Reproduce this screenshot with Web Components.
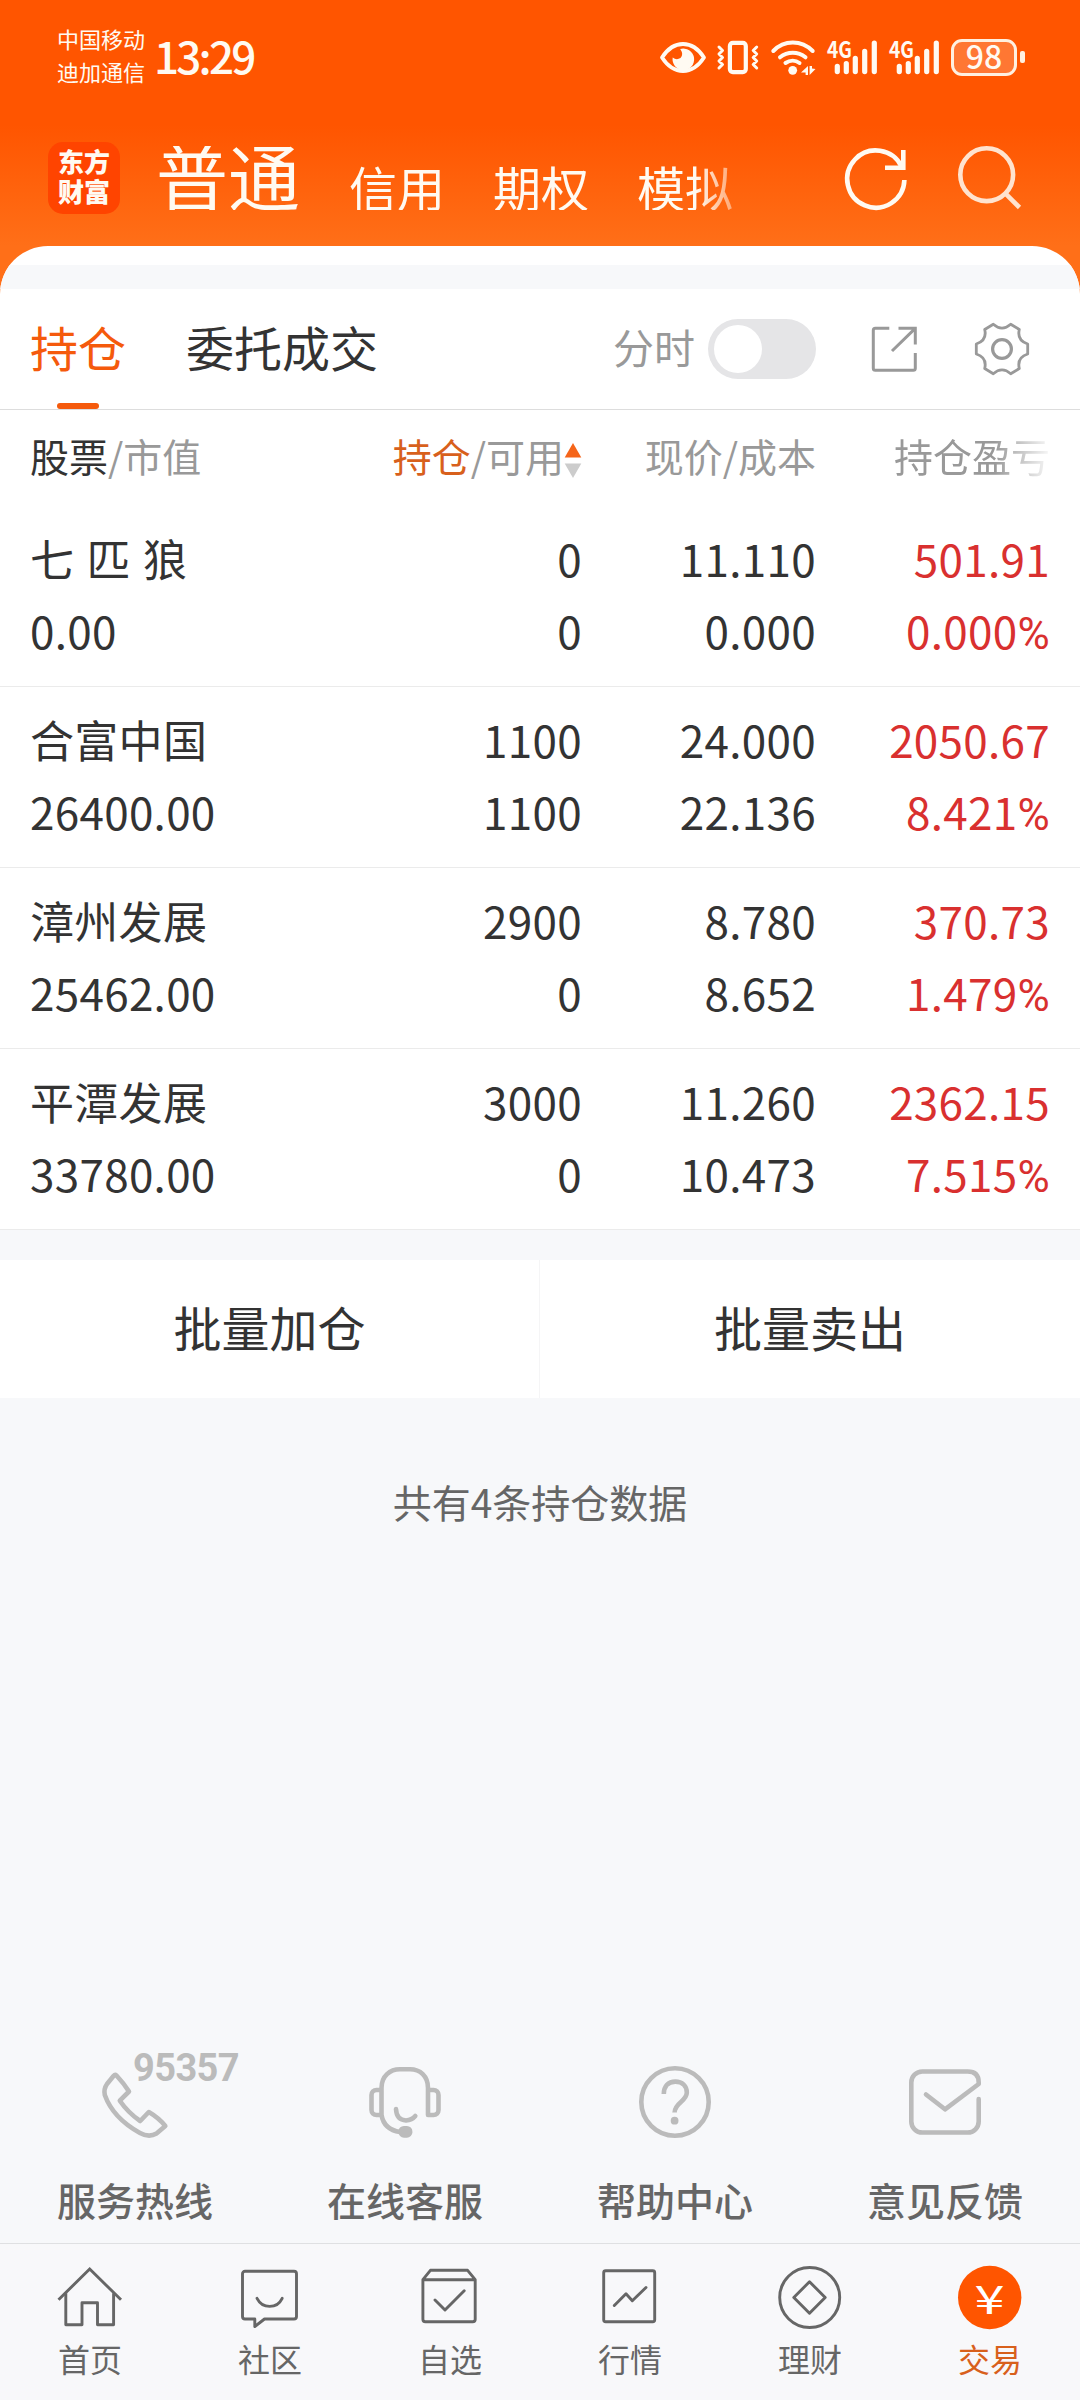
<!DOCTYPE html>
<html lang="zh-CN">
<head>
<meta charset="UTF-8">
<meta name="viewport" content="width=device-width, initial-scale=1.0">
<title>持仓</title>
<style>
  :root {
    --brand: #ff5500;
    --text: #333333;
    --muted: #999999;
    --up: #d9302f;
    --page: #f7f8fa;
  }

  body {
    margin: 0;
    width: 1080px;
    height: 2400px;
    display: flex;
    flex-direction: column;
    overflow: hidden;
    background: var(--page);
    color: var(--text);
    font-family: "Noto Sans CJK SC", "Noto Sans", sans-serif;
  }
</style>
</head>
<body>
  <app-header>
    <status-bar slot="status" carrier="中国移动" carrier2="迪加通信" time="13:29" battery="98"></status-bar>
    <span slot="current">普通</span>
    <span slot="link">信用</span>
    <span slot="link">期权</span>
    <span slot="link">模拟</span>
  </app-header>

  <holdings-card>
    <holdings-tabs slot="tabs" active="持仓" other="委托成交" toggle="分时"></holdings-tabs>
    <holdings-head slot="head"></holdings-head>
    <holding-row name="七 匹 狼" value="0.00" amount="0" usable="0" price="11.110" cost="0.000" profit="501.91" rate="0.000%"></holding-row>
    <holding-row name="合富中国" value="26400.00" amount="1100" usable="1100" price="24.000" cost="22.136" profit="2050.67" rate="8.421%"></holding-row>
    <holding-row name="漳州发展" value="25462.00" amount="2900" usable="0" price="8.780" cost="8.652" profit="370.73" rate="1.479%"></holding-row>
    <holding-row name="平潭发展" value="33780.00" amount="3000" usable="0" price="11.260" cost="10.473" profit="2362.15" rate="7.515%"></holding-row>
  </holdings-card>

  <batch-actions>
    <span slot="buy">批量加仓</span>
    <span slot="sell">批量卖出</span>
    <span slot="note">共有4条持仓数据</span>
  </batch-actions>

  <service-bar>
    <service-item icon="phone" badge="95357">服务热线</service-item>
    <service-item icon="headset">在线客服</service-item>
    <service-item icon="help">帮助中心</service-item>
    <service-item icon="mail">意见反馈</service-item>
  </service-bar>

  <bottom-nav>
    <nav-item icon="home">首页</nav-item>
    <nav-item icon="chat">社区</nav-item>
    <nav-item icon="box">自选</nav-item>
    <nav-item icon="chart">行情</nav-item>
    <nav-item icon="coin">理财</nav-item>
    <nav-item icon="trade" active>交易</nav-item>
  </bottom-nav>

<script>
  // name: [width, height, stroke width, markup]
  const ICONS = {
    eye: [46, 31, 3.8, `
      <path d="M2 15.5C7.5 7 14.5 2 23 2s15.500 5 21 13.500C38.500 24 31.500 29 23 29S7.500 24 2 15.500z"/>
      <path fill="currentColor" stroke="none" d="M20.200 7A10.800 10.800 0 1 1 12.700 15.500Q16.500 18.500 20.500 16Q24 12.500 20.200 7z"/>`],
    vibrate: [43, 35, 3, `
      <rect x="12.900" y="2.900" width="15.900" height="29.200" rx="3" stroke-width="4.200"/>
      <path d="M2 7l3.500 3.500L2 14l3.500 3.500L2 21l3.500 3.500L2 28M39.700 7l-3.500 3.500 3.500 3.500-3.500 3.500 3.500 3.500-3.500 3.500 3.500 3.500"/>`],
    wifi: [45, 35, 4, `
      <path d="M2.300 11C13-.3 30.500-.3 41.700 11M9 17.300c7.500-6.200 18-6.200 25.500 0M14.500 23c4.500-3 10-3 14 0"/>
      <circle cx="21.700" cy="30.300" r="4.400" fill="currentColor" stroke="none"/>
      <path fill="currentColor" stroke="none" d="M37 26v9h-2.400v-2.500H30zM38.600 26H41v2.500l3.500.5-5.900 6z"/>`],
    signal: [51, 35, 5.2, `
      <path d="M10.300 26.300v5.300M19.300 23.600v8M28.300 18.300v13.300M37.700 11.300v20.300M47.300 3v28.600"/>
      <text x="0" y="17.800" font-size="23" font-weight="700" textLength="25" lengthAdjust="spacingAndGlyphs" fill="currentColor" stroke="none">4G</text>`],
    refresh: [62, 62, 4.6, `
      <g stroke-linecap="butt" stroke-linejoin="miter"><path d="M59.400 32A28.600 28.600 0 1 1 56.500 18.500"/><path d="M58.300 2v17.800H40"/></g>`],
    search: [64, 64, 4.6, `
      <g stroke-linecap="butt"><circle cx="28.700" cy="28.700" r="26.400"/><path d="M47.300 47.300L61.500 61.500"/></g>`],
    share: [46, 46, 3, `
      <g stroke-linecap="butt" stroke-linejoin="miter"><path d="M18.300 2.300h-14a2 2 0 0 0-2 2v38a2 2 0 0 0 2 2h38a2 2 0 0 0 2-2V27M27.500 2.300h16.800v16.200M44 2.600L21 25"/></g>`],
    gear: [56, 56, 2.8, `
      <g transform="translate(28 28)"><path d="M25.700-5Q14.700-8.500 17.300-19.500L8.700-24.700Q0-17-8.700-24.700L-17.300-19.500Q-14.700-8.500-25.700-5V5Q-14.700 8.500-17.300 19.500L-8.700 24.700Q0 17 8.700 24.700L17.300 19.500Q14.700 8.500 25.700 5z"/><circle r="9.400" stroke-width="3.200"/></g>`],
    phone: [72, 72, 4.6, `
      <path d="M17.500 9.500Q24.500 17 30 25.500L20.800 34.700Q29 46.500 41.200 55L49.800 46Q60 52 66.300 60L57.500 67.500Q50 72 41 67Q14 52 5.800 29Q4.500 23 8 18L14.500 10Q16 8.300 17.500 9.500z"/>`],
    headset: [72, 72, 4.6, `
      <path d="M12.500 49V22C12.500 10 21 3.300 31 3.300h10C51 3.300 59 10 59 22v27M12.500 24h-5a5 5 0 0 0-5 5v15a5 5 0 0 0 5 5h5M59 24h5.500a5 5 0 0 1 5 5v15a5 5 0 0 1-5 5H59M12.500 49Q15 63.500 31 66M27 43Q27.500 54 37 54.500Q43 54 46.300 50"/>
      <rect x="29.400" y="60" width="14" height="11.700" rx="5.500" fill="currentColor" stroke="none"/>`],
    help: [72, 72, 4.6, `
      <circle cx="36" cy="36" r="33.700"/>
      <path stroke-linecap="butt" d="M24.800 28c0-8 4.500-12.400 11.500-12.400S47.800 20 47.800 26.500c0 9-12.200 10-12.200 20"/>
      <circle cx="35.600" cy="54.700" r="3.900" fill="currentColor" stroke="none"/>`],
    mail: [72, 72, 4.6, `
      <path d="M69.700 33v22.500a11 11 0 0 1-11 11H13.300a11 11 0 0 1-11-11v-39a11 11 0 0 1 11-11h45.400q11 0 11 11v1.500L36 43.300 17 28.500"/>`],
    home: [64, 64, 2.9, `
      <g stroke-linecap="butt" stroke-linejoin="miter"><path d="M.5 33.800L31.700 3 63 33.800"/><path stroke-linejoin="round" d="M7.800 27.300v31.400h16.200v-22h15.500v22h16.100V27.300"/></g>`],
    chat: [64, 64, 2.9, `
      <path d="M7 5.300h49a2.500 2.500 0 0 1 2.500 2.500v42.700a2.500 2.500 0 0 1-2.500 2.500H26.500l-9.700 7.500V53H7a2.500 2.500 0 0 1-2.500-2.500V7.800A2.500 2.500 0 0 1 7 5.300z"/>
      <path d="M19 32.300c5.500 10.800 20 10.800 25.200 0"/>`],
    box: [64, 64, 2.9, `
      <path d="M4.900 13.700l7.500-9.400h37.200l7.600 9.400v39.500a2.500 2.500 0 0 1-2.500 2.500H7.400a2.500 2.500 0 0 1-2.500-2.500zH57M17 34l10 10 19.200-19.300"/>`],
    chart: [64, 64, 2.9, `
      <rect x="5.700" y="4.700" width="51" height="51" rx="2"/>
      <path d="M16.300 39.500L28 27.800l6.300 7L48 21.500"/>`],
    coin: [64, 64, 2.9, `
      <circle cx="31.700" cy="31.500" r="30"/>
      <path d="M31.500 15.700L47.200 31.500 31.500 47.300 15.800 31.500z"/>`],
    trade: [64, 64, 0, `
      <circle cx="31.700" cy="31.500" r="31.700" fill="currentColor"/>
      <text x="16.500" y="47.500" font-size="39" textLength="30" lengthAdjust="spacingAndGlyphs" fill="#fff">¥</text>`],
  };

  class UiIcon extends HTMLElement {
    connectedCallback() {
      this.attachShadow({ mode: 'open' });
      const [w, h, stroke, body] = ICONS[this.getAttribute('name')];
      this.shadowRoot.innerHTML = `
        <style>
          :host { display: block; flex: none; width: ${w}px; height: ${h}px; }
          svg { display: block; overflow: visible; }
        </style>
        <svg width="${w}" height="${h}" viewBox="0 0 ${w} ${h}" fill="none" stroke="currentColor"
          stroke-width="${stroke}" stroke-linecap="round" stroke-linejoin="round">${body}</svg>
      `;
    }
  }

  class StatusBar extends HTMLElement {
    connectedCallback() {
      this.attachShadow({ mode: 'open' });
      const attr = (name) => this.getAttribute(name);
      this.shadowRoot.innerHTML = `
        <style>
          :host {
            display: flex;
            align-items: center;
            height: 114px;
            padding: 0 55px 0 57px;
            color: #fffaf2;
          }
          .carrier {
            font-size: 22px;
            line-height: 33px;
            margin-right: 9px;
            padding-bottom: 4px;
          }
          .carrier div { white-space: nowrap; }
          .time {
            font-size: 44px;
            font-weight: 500;
            line-height: 60px;
            letter-spacing: -2.8px;
            padding-bottom: 4px;
          }
          .icons {
            display: flex;
            align-items: center;
            gap: 11px;
            margin-left: auto;
          }
          .battery { display: flex; align-items: center; gap: 3px; width: 74px; }
          .level {
            box-sizing: border-box;
            width: 66px;
            height: 37px;
            border: 3px solid #fff0e0;
            border-radius: 11px;
            background: rgba(255, 255, 255, 0.2);
            font-size: 32px;
            font-weight: 500;
            line-height: 26px;
            text-align: center;
          }
          .cap { width: 5px; height: 12px; border-radius: 2px; background: #fff0e0; }
        </style>
        <div class="carrier"><div>${attr('carrier')}</div><div>${attr('carrier2')}</div></div>
        <div class="time">${attr('time')}</div>
        <div class="icons">
          <ui-icon name="eye"></ui-icon>
          <ui-icon name="vibrate"></ui-icon>
          <ui-icon name="wifi"></ui-icon>
          <ui-icon name="signal"></ui-icon>
          <ui-icon name="signal"></ui-icon>
          <div class="battery"><div class="level">${attr('battery')}</div><div class="cap"></div></div>
        </div>
      `;
    }
  }

  class AppHeader extends HTMLElement {
    connectedCallback() {
      this.attachShadow({ mode: 'open' });
      this.shadowRoot.innerHTML = `
        <style>
          :host {
            display: block;
            height: 300px;
            margin-bottom: -54px;
            background: linear-gradient(#ff5500 0, #ff5500 125px, #ff6f18 246px, #ff6f18 100%);
            color: #fffaf2;
          }
          .bar {
            display: flex;
            align-items: center;
            box-sizing: border-box;
            height: 132px;
            padding: 0 58px 4px 48px;
          }
          .logo {
            display: grid;
            place-content: center;
            width: 72px;
            height: 72px;
            border-radius: 15px;
            background: #ff4400;
            font-family: "Liberation Sans", "Noto Sans CJK SC", sans-serif;
            font-size: 26px;
            font-weight: 900;
            line-height: 30px;
            text-align: center;
          }
          nav {
            display: flex;
            align-items: flex-end;
            gap: 48px;
            width: 597px;
            height: 64px;
            margin-left: 36px;
            font-size: 48px;
            line-height: 48px;
            white-space: nowrap;
            -webkit-mask-image: linear-gradient(90deg, #000 540px, rgba(0, 0, 0, 0.45) 576px);
            mask-image: linear-gradient(90deg, #000 540px, rgba(0, 0, 0, 0.45) 576px);
          }
          .current { font-size: 72px; line-height: 72px; margin-right: 1px; }
          .tools { display: flex; align-items: center; gap: 51px; margin-left: auto; }
          .tools ui-icon:first-child { margin-top: 2px; }
          .tools ui-icon:last-child { color: #ffe3cf; }
        </style>
        <slot name="status"></slot>
        <div class="bar">
          <div class="logo"><span>东方</span><span>财富</span></div>
          <nav><div class="current"><slot name="current"></slot></div><slot name="link"></slot></nav>
          <div class="tools"><ui-icon name="refresh"></ui-icon><ui-icon name="search"></ui-icon></div>
        </div>
      `;
    }
  }

  class HoldingsCard extends HTMLElement {
    connectedCallback() {
      this.attachShadow({ mode: 'open' });
      this.shadowRoot.innerHTML = `
        <style>
          :host {
            display: block;
            overflow: hidden;
            border-radius: 48px 48px 0 0;
            background: #fff;
          }
          .strip { height: 24px; margin-top: 19px; background: #f7f8fa; }
        </style>
        <div class="strip"></div>
        <slot name="tabs"></slot>
        <slot name="head"></slot>
        <slot></slot>
      `;
    }
  }

  class HoldingsTabs extends HTMLElement {
    connectedCallback() {
      this.attachShadow({ mode: 'open' });
      this.shadowRoot.innerHTML = `
        <style>
          :host {
            display: flex;
            align-items: center;
            height: 120px;
            padding: 0 50px 0 30px;
            border-bottom: 1px solid #dddddd;
            font-size: 48px;
            line-height: 114px;
          }
          .tab {
            position: relative;
            height: 120px;
            margin-right: 60px;
          }
          .active { color: #f55a0c; }
          .active::after {
            content: '';
            position: absolute;
            left: 27px;
            bottom: 0;
            width: 42px;
            height: 6px;
            border-radius: 3px;
            background: #f55a0c;
          }
          .label { margin-left: auto; height: 120px; font-size: 41px; color: var(--muted); }
          .switch {
            box-sizing: border-box;
            width: 108px;
            height: 60px;
            margin: 0 55px 0 13px;
            padding: 6px;
            border-radius: 30px;
            background: #e5e5e7;
          }
          .knob { width: 48px; height: 48px; border-radius: 50%; background: #fff; }
          ui-icon { color: var(--muted); }
          ui-icon + ui-icon { margin-left: 57px; }
        </style>
        <div class="tab active">${this.getAttribute('active')}</div>
        <div class="tab">${this.getAttribute('other')}</div>
        <div class="label">${this.getAttribute('toggle')}</div>
        <div class="switch"><div class="knob"></div></div>
        <ui-icon name="share"></ui-icon>
        <ui-icon name="gear"></ui-icon>
      `;
    }
  }

  const COLUMNS = '552px 234px 234px';

  class HoldingsHead extends HTMLElement {
    connectedCallback() {
      this.attachShadow({ mode: 'open' });
      this.shadowRoot.innerHTML = `
        <style>
          :host {
            display: grid;
            grid-template-columns: ${COLUMNS};
            height: 96px;
            padding: 0 30px;
            font-size: 39px;
            line-height: 91px;
            color: var(--muted);
            text-align: right;
            white-space: nowrap;
          }
          .first { display: flex; justify-content: space-between; }
          b { font-weight: 400; color: var(--text); }
          .sorted { display: flex; align-items: center; height: 96px; }
          .sorted span { height: 96px; }
          .sorted b { color: #d8601c; }
          .sorted svg { display: block; margin-top: 3px; }
          .fade {
            -webkit-mask-image: linear-gradient(90deg, #000 178px, transparent 238px);
            mask-image: linear-gradient(90deg, #000 178px, transparent 238px);
          }
        </style>
        <div class="first">
          <span><b>股票</b>/市值</span>
          <div class="sorted">
            <span><b>持仓</b>/可用</span>
            <svg width="18" height="36" viewBox="0 0 18 36">
              <path fill="#f5651a" d="M9 1L17.300 15.500H.7z"/>
              <path fill="#cccccc" d="M9 36L.7 21.500h16.600z"/>
            </svg>
          </div>
        </div>
        <div>现价/成本</div>
        <div class="fade">持仓盈亏</div>
      `;
    }
  }

  class HoldingRow extends HTMLElement {
    connectedCallback() {
      this.attachShadow({ mode: 'open' });
      const pair = (top, bottom) => {
        const last = this.getAttribute(bottom).replace('%', '<i>%</i>');
        return `<div><div>${this.getAttribute(top)}</div><div>${last}</div></div>`;
      };
      this.shadowRoot.innerHTML = `
        <style>
          :host {
            display: grid;
            grid-template-columns: ${COLUMNS};
            height: 144px;
            padding: 16px 30px 20px;
            border-bottom: 1px solid #ebebeb;
            font-size: 44px;
            line-height: 72px;
            letter-spacing: 0.3px;
            word-spacing: 2px;
            text-align: right;
            white-space: nowrap;
          }
          .first { display: flex; justify-content: space-between; }
          .first > :first-child { text-align: left; }
          .profit { color: var(--up); }
          i { font-family: Roboto, sans-serif; font-style: normal; line-height: 1; }
        </style>
        <div class="first">${pair('name', 'value')}${pair('amount', 'usable')}</div>
        ${pair('price', 'cost')}
        <div class="profit">${pair('profit', 'rate')}</div>
      `;
    }
  }

  class BatchActions extends HTMLElement {
    connectedCallback() {
      this.attachShadow({ mode: 'open' });
      this.shadowRoot.innerHTML = `
        <style>
          :host { display: block; flex: 1; padding-top: 30px; text-align: center; }
          .buttons {
            display: grid;
            grid-template-columns: 539px 1px 1fr;
            height: 138px;
            background: #fff;
            font-size: 48px;
            line-height: 132px;
          }
          .line { background: #f5f5f6; }
          .note { margin-top: 77px; font-size: 39px; line-height: 52px; color: #666666; }
        </style>
        <div class="buttons">
          <slot name="buy"></slot>
          <div class="line"></div>
          <slot name="sell"></slot>
        </div>
        <div class="note"><slot name="note"></slot></div>
      `;
    }
  }

  class ServiceBar extends HTMLElement {
    connectedCallback() {
      this.attachShadow({ mode: 'open' });
      this.shadowRoot.innerHTML = `
        <style>
          :host { display: grid; grid-template-columns: repeat(4, 1fr); height: 177px; }
        </style>
        <slot></slot>
      `;
    }
  }

  class ServiceItem extends HTMLElement {
    connectedCallback() {
      this.attachShadow({ mode: 'open' });
      const badge = this.getAttribute('badge');
      this.shadowRoot.innerHTML = `
        <style>
          :host {
            position: relative;
            display: flex;
            flex-direction: column;
            align-items: center;
            font-size: 39px;
            font-weight: 500;
            line-height: 56px;
            color: #666666;
          }
          ui-icon { color: #bbbbbb; margin-bottom: 33px; }
          .badge {
            position: absolute;
            left: 50%;
            top: -17px;
            margin-left: -2px;
            font: 700 38px/38px Roboto, sans-serif;
            letter-spacing: -0.6px;
            color: #bbbbbb;
          }
        </style>
        <ui-icon name="${this.getAttribute('icon')}"></ui-icon>
        ${badge ? `<span class="badge">${badge}</span>` : ''}
        <slot></slot>
      `;
    }
  }

  class BottomNav extends HTMLElement {
    connectedCallback() {
      this.attachShadow({ mode: 'open' });
      this.shadowRoot.innerHTML = `
        <style>
          :host {
            display: grid;
            grid-template-columns: repeat(6, 1fr);
            height: 156px;
            border-top: 1px solid #dfe0e2;
            background: #f8f8fa;
          }
        </style>
        <slot></slot>
      `;
    }
  }

  class NavItem extends HTMLElement {
    connectedCallback() {
      this.attachShadow({ mode: 'open' });
      this.shadowRoot.innerHTML = `
        <style>
          :host {
            display: flex;
            flex-direction: column;
            align-items: center;
            padding-top: 22px;
            font-size: 32px;
            line-height: 44px;
            color: #666666;
          }
          :host([active]) { color: #d8601c; }
          :host([active]) ui-icon { color: var(--brand); }
          ui-icon { margin-bottom: 6px; }
        </style>
        <ui-icon name="${this.getAttribute('icon')}"></ui-icon>
        <slot></slot>
      `;
    }
  }

  customElements.define('ui-icon', UiIcon);
  customElements.define('status-bar', StatusBar);
  customElements.define('app-header', AppHeader);
  customElements.define('holdings-card', HoldingsCard);
  customElements.define('holdings-tabs', HoldingsTabs);
  customElements.define('holdings-head', HoldingsHead);
  customElements.define('holding-row', HoldingRow);
  customElements.define('batch-actions', BatchActions);
  customElements.define('service-bar', ServiceBar);
  customElements.define('service-item', ServiceItem);
  customElements.define('bottom-nav', BottomNav);
  customElements.define('nav-item', NavItem);
</script>
</body>
</html>
